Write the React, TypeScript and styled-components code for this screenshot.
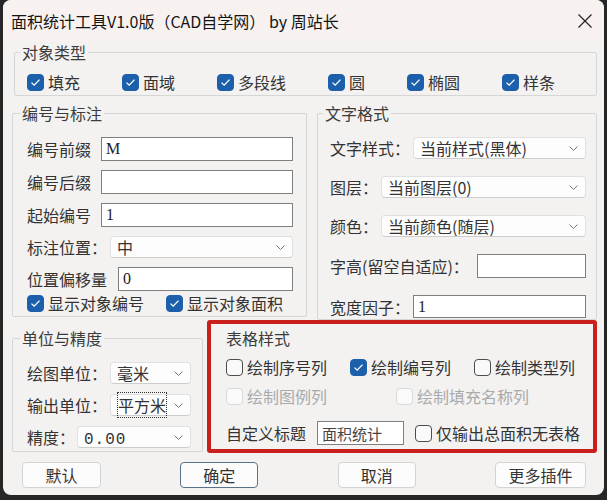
import styled, { createGlobalStyle } from "styled-components";

const GlobalStyle = createGlobalStyle`
  html, body {
    margin: 0;
    padding: 0;
    background: #262626;
  }
  body {
    width: 607px;
    height: 500px;
    overflow: hidden;
    font-family: "Noto Sans CJK SC", "Noto Sans", sans-serif;
  }
`;

const Window = styled.div`
  width: 601px;
  height: 495px;
  margin: 0 3px;
  background: #f3f2f1;
  border-radius: 8px;
  overflow: hidden;
  display: flex;
  flex-direction: column;
`;

const TitleBar = styled.div`
  height: 42px;
  flex-shrink: 0;
  display: flex;
  align-items: center;
  justify-content: space-between;
  padding: 0 12px 0 8px;
  background: #f7f2f0;
  font-size: 16px;
  color: #141414;
`;

const Content = styled.div`
  display: flex;
  flex-direction: column;
  padding: 0 7px 0 9px;
`;

const Group = styled.fieldset<{ $width?: number; $pad?: string; $offset?: number }>`
  box-sizing: border-box;
  width: ${(p) => (p.$width ? p.$width + "px" : "auto")};
  min-width: 0;
  margin: ${(p) => p.$offset ?? 0}px 0 0 0;
  border: 1px solid #d6d6d6;
  border-radius: 2px;
  padding: ${(p) => p.$pad ?? "14px 13px 3px 14px"};
`;

const Legend = styled.legend`
  font-size: 16px;
  line-height: 20px;
  color: #3c3c3c;
  padding: 0 2px;
  margin-left: -7px;
`;

const CheckRow = styled.div<{ $gap: number; $shift?: number }>`
  display: flex;
  align-items: center;
  gap: ${(p) => p.$gap}px;
  height: 20px;
  margin-top: ${(p) => p.$shift ?? 0}px;
`;

const CheckItem = styled.label<{ $disabled?: boolean }>`
  display: inline-flex;
  align-items: center;
  gap: 4px;
  font-size: 16px;
  line-height: 20px;
  color: ${(p) => (p.$disabled ? "#aaaaaa" : "#333")};
  white-space: nowrap;
`;

const Box = styled.span<{ $checked?: boolean; $disabled?: boolean }>`
  width: 17px;
  height: 17px;
  box-sizing: border-box;
  flex-shrink: 0;
  border-radius: 4px;
  display: inline-flex;
  align-items: center;
  justify-content: center;
  background: ${(p) => (p.$checked ? "#1c5faa" : "#fafafa")};
  border: 1px solid
    ${(p) => (p.$checked ? "#1c5faa" : p.$disabled ? "#d9d9d9" : "#4d4d4d")};
`;

const Stack = styled.div<{ $gap: number; $top?: number }>`
  display: flex;
  flex-direction: column;
  gap: ${(p) => p.$gap}px;
  margin-top: ${(p) => p.$top ?? 0}px;
`;

const Row = styled.div<{ $gap: number; $top?: number }>`
  display: flex;
  align-items: center;
  gap: ${(p) => p.$gap}px;
  margin-top: ${(p) => p.$top ?? 0}px;
`;

const Label = styled.span`
  font-size: 16px;
  line-height: 20px;
  color: #333;
  white-space: nowrap;
  flex-shrink: 0;
`;

const TextInput = styled.input<{ $h?: number; $w?: number }>`
  box-sizing: border-box;
  height: ${(p) => p.$h ?? 24}px;
  ${(p) => (p.$w ? `width: ${p.$w}px; flex: none;` : "flex: 1; width: 0;")}
  min-width: 0;
  margin: 0;
  background: #fff;
  border: 1px solid #7f7f7f;
  border-radius: 0;
  padding: 0 4px;
  font-family: "Liberation Serif", "Noto Sans CJK SC", serif;
  font-size: 16px;
  color: #222;
  outline: none;
`;

const TitleInput = styled(TextInput)`
  font-family: "Noto Sans CJK SC", sans-serif;
  font-size: 15px;
  color: #444;
`;

const SelectBox = styled.div<{ $h?: number }>`
  box-sizing: border-box;
  flex: 1;
  min-width: 0;
  height: ${(p) => p.$h ?? 22}px;
  display: flex;
  align-items: center;
  justify-content: space-between;
  gap: 2px;
  background: #fdfdfd;
  border: 1px solid #e0e0e0;
  border-bottom-color: #cdcdcd;
  border-radius: 4px;
  padding: 0 7px 0 6px;
  font-size: 16px;
  color: #333;
  white-space: nowrap;

  svg {
    flex-shrink: 0;
  }
`;

const Focused = styled.span`
  border: 1px dotted #333;
  padding: 0;
  line-height: 18px;
`;

const Mono = styled.span`
  font-family: "Liberation Mono", monospace;
  font-size: 16px;
  letter-spacing: 1px;
`;

const Highlight = styled.div`
  box-sizing: border-box;
  width: 390px;
  border: 4px solid #c9201d;
  border-radius: 3px;
  padding: 4px 11px 4px 15px;
  display: flex;
  flex-direction: column;
`;

const SectionTitle = styled.div`
  font-size: 16px;
  line-height: 20px;
  color: #3c3c3c;
`;

const Split = styled.div<{ $top: number }>`
  display: flex;
  align-items: flex-start;
  justify-content: space-between;
  margin-top: ${(p) => p.$top}px;
`;

const Buttons = styled.div`
  display: flex;
  justify-content: space-between;
  padding: 0 11px 0 10px;
  margin-top: 9px;
`;

const Button = styled.button<{ $w: number; $default?: boolean }>`
  width: ${(p) => p.$w}px;
  height: 26px;
  box-sizing: border-box;
  background: #fcfcfc;
  border: 1px solid ${(p) => (p.$default ? "#5b7389" : "#d3d3d3")};
  border-radius: 4px;
  font-family: "Noto Sans CJK SC", sans-serif;
  font-size: 16px;
  color: #333;
  padding: 0;
`;

const CheckIcon = () => (
  <svg width="11" height="9" viewBox="0 0 11 9">
    <path d="M1.5 4.6 L4.2 7.2 L9.5 1.6" fill="none" stroke="#fff" strokeWidth="1.3" />
  </svg>
);

const Chevron = () => (
  <svg width="9" height="5" viewBox="0 0 9 5">
    <path d="M0.5 0.5 L4.5 4.5 L8.5 0.5" fill="none" stroke="#777" strokeWidth="1" />
  </svg>
);

const CloseIcon = () => (
  <svg width="14" height="14" viewBox="0 0 14 14">
    <path d="M0.5 0.5 L13.5 13.5 M13.5 0.5 L0.5 13.5" stroke="#222" strokeWidth="1.2" />
  </svg>
);

type CheckProps = { text: string; checked?: boolean; disabled?: boolean };

const Check = ({ text, checked, disabled }: CheckProps) => (
  <CheckItem $disabled={disabled}>
    <Box $checked={checked} $disabled={disabled}>
      {checked && <CheckIcon />}
    </Box>
    {text}
  </CheckItem>
);

const Select = ({ children, h }: { children: React.ReactNode; h?: number }) => (
  <SelectBox $h={h}>
    <span>{children}</span>
    <Chevron />
  </SelectBox>
);

const objectTypes = ["填充", "面域", "多段线", "圆", "椭圆", "样条"];

export default function App() {
  return (
    <>
      <GlobalStyle />
      <Window>
        <TitleBar>
          <span>面积统计工具V1.0版（CAD自学网） by 周站长</span>
          <CloseIcon />
        </TitleBar>
        <Content>
          <Group $pad="10px 12px 3px 12px" style={{ marginLeft: 2 }}>
            <Legend>对象类型</Legend>
            <CheckRow $gap={42}>
              {objectTypes.map((t) => (
                <Check key={t} text={t} checked />
              ))}
            </CheckRow>
          </Group>

          <Split $top={7}>
            <Group $width={295}>
              <Legend>编号与标注</Legend>
              <Stack $gap={9}>
                <Row $gap={10}>
                  <Label>编号前缀</Label>
                  <TextInput readOnly value="M" />
                </Row>
                <Row $gap={10}>
                  <Label>编号后缀</Label>
                  <TextInput readOnly value="" />
                </Row>
                <Row $gap={10}>
                  <Label>起始编号</Label>
                  <TextInput readOnly value="1" />
                </Row>
                <Row $gap={3}>
                  <Label>标注位置：</Label>
                  <Select>中</Select>
                </Row>
                <Row $gap={11}>
                  <Label>位置偏移量</Label>
                  <TextInput readOnly value="0" />
                </Row>
                <CheckRow $gap={22} $shift={-7}>
                  <Check text="显示对象编号" checked />
                  <Check text="显示对象面积" checked />
                </CheckRow>
              </Stack>
            </Group>

            <Group $width={280} $pad="14px 10px 1px 12px">
              <Legend>文字格式</Legend>
              <Stack $gap={17}>
                <Row $gap={3}>
                  <Label>文字样式：</Label>
                  <Select>当前样式(黑体)</Select>
                </Row>
                <Row $gap={3}>
                  <Label>图层：</Label>
                  <Select>当前图层(0)</Select>
                </Row>
                <Row $gap={3}>
                  <Label>颜色：</Label>
                  <Select>当前颜色(随层)</Select>
                </Row>
                <Row $gap={8}>
                  <Label>字高(留空自适应)：</Label>
                  <TextInput readOnly value="" $h={24} />
                </Row>
                <Row $gap={3}>
                  <Label>宽度因子：</Label>
                  <TextInput readOnly value="1" $h={23} />
                </Row>
              </Stack>
            </Group>
          </Split>

          <Split $top={0}>
            <Group $width={191} $offset={8} $pad="14px 11px 3px 14px">
              <Legend>单位与精度</Legend>
              <Stack $gap={10}>
                <Row $gap={3}>
                  <Label>绘图单位：</Label>
                  <Select>毫米</Select>
                </Row>
                <Row $gap={3}>
                  <Label>输出单位：</Label>
                  <Select>
                    <Focused>平方米</Focused>
                  </Select>
                </Row>
                <Row $gap={2}>
                  <Label>精度：</Label>
                  <Select>
                    <Mono>0.00</Mono>
                  </Select>
                </Row>
              </Stack>
            </Group>

            <Highlight>
              <SectionTitle>表格样式</SectionTitle>
              <Stack $gap={9} $top={9}>
                <CheckRow $gap={23}>
                  <Check text="绘制序号列" />
                  <Check text="绘制编号列" checked />
                  <Check text="绘制类型列" />
                </CheckRow>
                <CheckRow $gap={69}>
                  <Check text="绘制图例列" disabled />
                  <Check text="绘制填充名称列" disabled />
                </CheckRow>
              </Stack>
              <Row $gap={11} $top={15}>
                <Label>自定义标题</Label>
                <TitleInput readOnly value="面积统计" $w={87} />
                <Check text="仅输出总面积无表格" />
              </Row>
            </Highlight>
          </Split>

          <Buttons>
            <Button $w={79}>默认</Button>
            <Button $w={78} $default>
              确定
            </Button>
            <Button $w={78}>取消</Button>
            <Button $w={91}>更多插件</Button>
          </Buttons>
        </Content>
      </Window>
    </>
  );
}
